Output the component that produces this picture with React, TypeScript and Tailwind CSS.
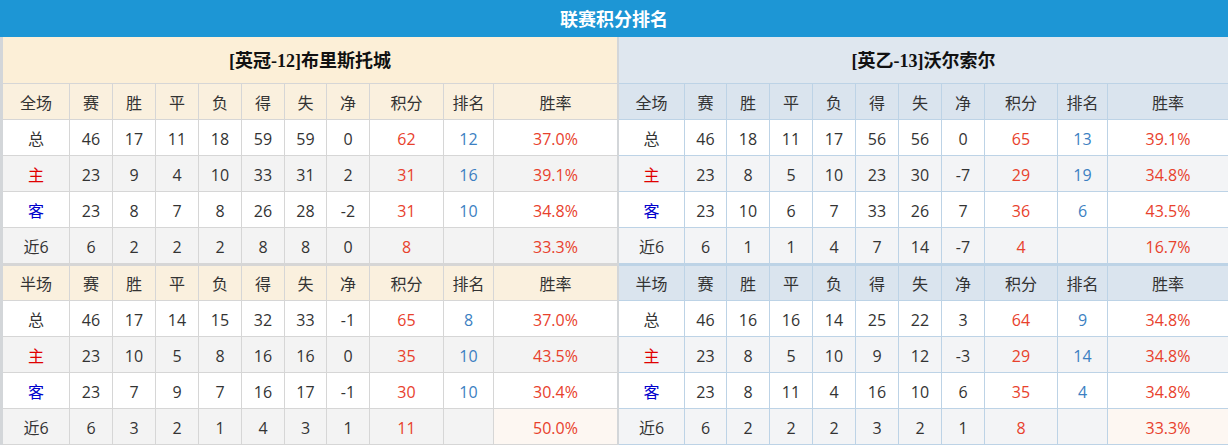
import React from "react";

type Row = {
  label: string;
  cells: (string | number)[];
  pts: string | number;
  rank: string | number;
  rate: string;
};

const leftFull: Row[] = [
  { label: "总", cells: [46, 17, 11, 18, 59, 59, 0], pts: 62, rank: 12, rate: "37.0%" },
  { label: "主", cells: [23, 9, 4, 10, 33, 31, 2], pts: 31, rank: 16, rate: "39.1%" },
  { label: "客", cells: [23, 8, 7, 8, 26, 28, -2], pts: 31, rank: 10, rate: "34.8%" },
  { label: "近6", cells: [6, 2, 2, 2, 8, 8, 0], pts: 8, rank: "", rate: "33.3%" },
];
const leftHalf: Row[] = [
  { label: "总", cells: [46, 17, 14, 15, 32, 33, -1], pts: 65, rank: 8, rate: "37.0%" },
  { label: "主", cells: [23, 10, 5, 8, 16, 16, 0], pts: 35, rank: 10, rate: "43.5%" },
  { label: "客", cells: [23, 7, 9, 7, 16, 17, -1], pts: 30, rank: 10, rate: "30.4%" },
  { label: "近6", cells: [6, 3, 2, 1, 4, 3, 1], pts: 11, rank: "", rate: "50.0%" },
];
const rightFull: Row[] = [
  { label: "总", cells: [46, 18, 11, 17, 56, 56, 0], pts: 65, rank: 13, rate: "39.1%" },
  { label: "主", cells: [23, 8, 5, 10, 23, 30, -7], pts: 29, rank: 19, rate: "34.8%" },
  { label: "客", cells: [23, 10, 6, 7, 33, 26, 7], pts: 36, rank: 6, rate: "43.5%" },
  { label: "近6", cells: [6, 1, 1, 4, 7, 14, -7], pts: 4, rank: "", rate: "16.7%" },
];
const rightHalf: Row[] = [
  { label: "总", cells: [46, 16, 16, 14, 25, 22, 3], pts: 64, rank: 9, rate: "34.8%" },
  { label: "主", cells: [23, 8, 5, 10, 9, 12, -3], pts: 29, rank: 14, rate: "34.8%" },
  { label: "客", cells: [23, 8, 11, 4, 16, 10, 6], pts: 35, rank: 4, rate: "34.8%" },
  { label: "近6", cells: [6, 2, 2, 2, 3, 2, 1], pts: 8, rank: "", rate: "33.3%" },
];

const heads = ["赛", "胜", "平", "负", "得", "失", "净", "积分", "排名", "胜率"];

type Theme = {
  cols: string;
  border: string;
  teamBg: string;
  headBg: string;
  altBg: string;
  thick: string;
};

const leftTheme: Theme = {
  cols: "grid-cols-[67px_43px_43px_43px_43px_43px_42px_43px_74px_50px_123px]",
  border: "border-[#d6d6d6]",
  teamBg: "bg-[#fcefd7]",
  headBg: "bg-[#faf0de]",
  altBg: "bg-[#f3f3f3]",
  thick: "border-[#d2d2d2]",
};

const rightTheme: Theme = {
  cols: "grid-cols-[66px_42px_43px_43px_43px_43px_43px_43px_73px_50px_120px]",
  border: "border-[#bdd3e6]",
  teamBg: "bg-[#dfe7ef]",
  headBg: "bg-[#dae4ee]",
  altBg: "bg-[#f3f4f6]",
  thick: "border-[#b9cfe2]",
};

function labelColor(l: string) {
  if (l === "主") return "text-[#e00000]";
  if (l === "客") return "text-[#0000cc]";
  return "text-[#333]";
}

function HeadRow({ t, first, thick }: { t: Theme; first: string; thick?: boolean }) {
  return (
    <div
      className={`grid ${t.cols} ${t.headBg} border-b ${t.border} ${thick ? `border-t-2 ${t.thick} h-[37px]` : "h-[36px]"}`}
    >
      {[first, ...heads].map((h, i) => (
        <div
          key={i}
          className={`flex items-center justify-center pt-[2px] text-[#333] ${i < 10 ? `border-r ${t.border}` : ""}`}
        >
          {h}
        </div>
      ))}
    </div>
  );
}

function DataRow({ t, r, idx, lastPale }: { t: Theme; r: Row; idx: number; lastPale?: boolean }) {
  const bg = idx % 2 === 1 ? t.altBg : "bg-white";
  const cell = `flex items-center justify-center pt-[3px] border-r ${t.border}`;
  return (
    <div className={`grid ${t.cols} h-[36px] border-b ${t.border} ${bg}`}>
      <div className={`${cell} pt-[1px] ${labelColor(r.label)}`}>{r.label}</div>
      {r.cells.map((c, i) => (
        <div key={i} className={`${cell} text-[#333]`}>
          {c}
        </div>
      ))}
      <div className={`${cell} text-[#e8412c]`}>{r.pts}</div>
      <div className={`${cell} text-[#3c7fc2]`}>{r.rank}</div>
      <div className={`flex items-center justify-center pt-[3px] text-[#e8412c] ${lastPale ? "bg-[#fdf7f2]" : ""}`}>
        {r.rate}
      </div>
    </div>
  );
}

function Side({ t, team, full, half }: { t: Theme; team: string; full: Row[]; half: Row[] }) {
  return (
    <div className="flex flex-col">
      <div
        className={`h-[47px] flex items-center justify-center pt-[3px] border-b ${t.border} ${t.teamBg} font-bold text-[18px] text-[#111]`}
        style={{ fontFamily: '"Liberation Serif", "Noto Sans CJK SC", serif' }}
      >
        {team}
      </div>
      <HeadRow t={t} first="全场" />
      {full.map((r, i) => (
        <DataRow key={i} t={t} r={r} idx={i} />
      ))}
      <HeadRow t={t} first="半场" thick />
      {half.map((r, i) => (
        <DataRow key={i} t={t} r={r} idx={i} lastPale={i === 3} />
      ))}
    </div>
  );
}

export default function App() {
  return (
    <div
      className="w-[1228px] h-[447px] overflow-hidden bg-white text-[16px]"
      style={{ fontFamily: '"Open Sans", "Noto Sans CJK SC", sans-serif' }}
    >
      <div
        className="h-[37px] bg-[#1d96d5] flex items-center justify-center text-white font-bold text-[18px]"
        style={{ fontFamily: '"Noto Sans CJK SC", sans-serif' }}
      >
        联赛积分排名
      </div>
      <div className="flex">
        <div className="border-l-[3px] border-r-2 border-[#d3d6d9]">
          <Side t={leftTheme} team="[英冠-12]布里斯托城" full={leftFull} half={leftHalf} />
        </div>
        <Side t={rightTheme} team="[英乙-13]沃尔索尔" full={rightFull} half={rightHalf} />
      </div>
    </div>
  );
}
